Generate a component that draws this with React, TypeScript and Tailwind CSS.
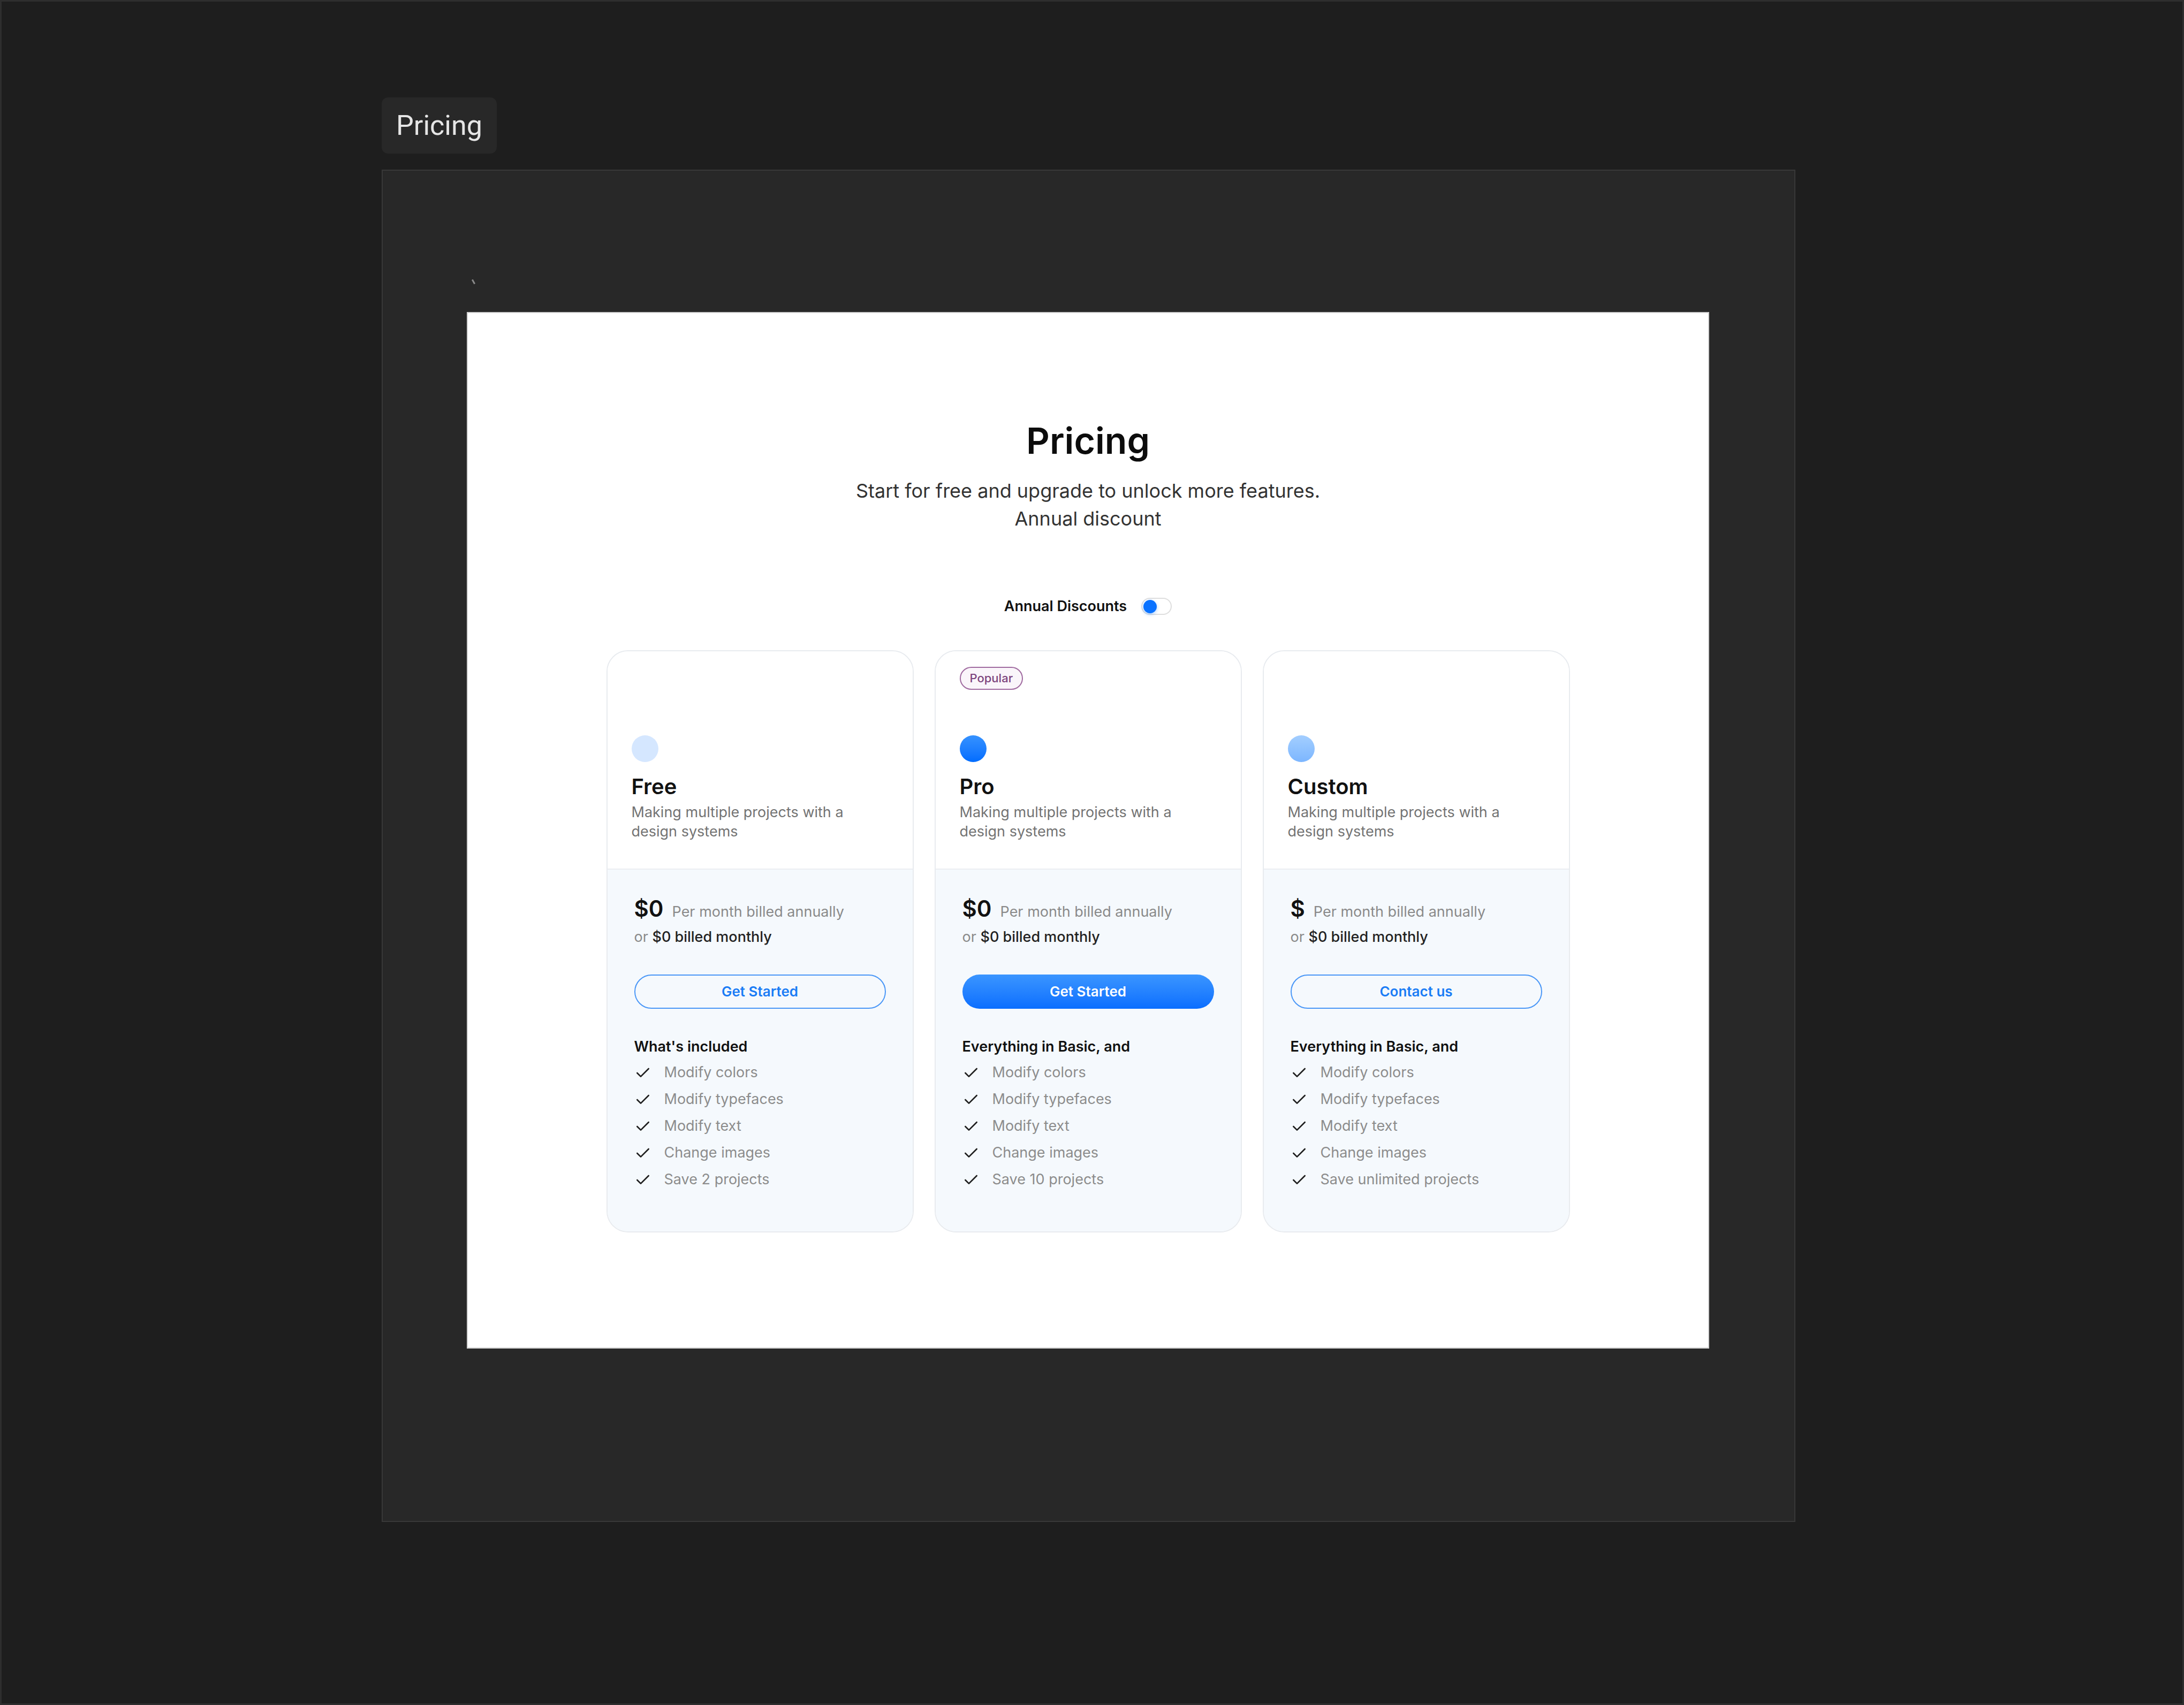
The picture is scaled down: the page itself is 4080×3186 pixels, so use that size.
import { Check } from "lucide-react";

type Plan = {
  name: string;
  popular?: boolean;
  dot: string;
  price: string;
  cta: string;
  solid?: boolean;
  heading: string;
  features: string[];
};

const plans: Plan[] = [
  {
    name: "Free",
    dot: "bg-[#d5e7ff]",
    price: "$0",
    cta: "Get Started",
    heading: "What's included",
    features: ["Modify colors", "Modify typefaces", "Modify text", "Change images", "Save 2 projects"],
  },
  {
    name: "Pro",
    popular: true,
    dot: "bg-gradient-to-b from-[#3592ff] to-[#006cff]",
    price: "$0",
    cta: "Get Started",
    solid: true,
    heading: "Everything in Basic, and",
    features: ["Modify colors", "Modify typefaces", "Modify text", "Change images", "Save 10 projects"],
  },
  {
    name: "Custom",
    dot: "bg-gradient-to-b from-[#a3ceff] to-[#7cb6ff]",
    price: "$",
    cta: "Contact us",
    heading: "Everything in Basic, and",
    features: ["Modify colors", "Modify typefaces", "Modify text", "Change images", "Save unlimited projects"],
  },
];

function PlanCard({ plan }: { plan: Plan }) {
  return (
    <div className="w-[574px] h-[1088px] rounded-[40px] border-2 border-[#e8ebef] overflow-hidden flex flex-col">
      <div className="bg-white h-[406px] px-[45px] pt-[29px] flex flex-col items-start">
        <div className="h-[43px]">
          {plan.popular && (
            <span className="inline-flex items-center h-[43px] px-[17px] rounded-full border-2 border-[#a06ba0] bg-[#faf5fa] text-[22px] font-medium text-[#7d447d]">
              Popular
            </span>
          )}
        </div>
        <div className={`mt-[85px] w-[50px] h-[50px] rounded-full ${plan.dot}`} />
        <h3 className="mt-[22px] text-[40px] leading-[48px] font-semibold text-[#111]">{plan.name}</h3>
        <p className="mt-[6px] w-[440px] text-[27px] leading-[36px] text-[#737373]">
          Making multiple projects with a design systems
        </p>
      </div>

      <div className="flex-1 bg-[#f5f9fd] border-t-2 border-[#eceef2] px-[50px] pt-[48px]">
        <div className="flex items-baseline gap-[16px]">
          <span className="text-[42px] leading-[50px] font-semibold text-[#111]">{plan.price}</span>
          <span className="text-[27px] text-[#8a8a8a]">Per month billed annually</span>
        </div>
        <div className="mt-[8px] text-[27px] leading-[36px]">
          <span className="text-[#8a8a8a]">or </span>
          <span className="text-[#222] font-medium">$0 billed monthly</span>
        </div>

        <button
          className={
            plan.solid
              ? "mt-[52px] w-full h-[64px] rounded-full bg-gradient-to-b from-[#3a95ff] to-[#0a6eff] text-white text-[26px] font-semibold"
              : "mt-[52px] w-full h-[64px] rounded-full border-2 border-[#4a97f7] text-[#1a7cf5] text-[26px] font-semibold"
          }
        >
          {plan.cta}
        </button>

        <div className="mt-[53px] text-[27px] leading-[36px] font-semibold text-[#111]">{plan.heading}</div>
        <ul className="mt-[6px]">
          {plan.features.map((f) => (
            <li key={f} className="h-[50px] flex items-center gap-[24px]">
              <Check size={32} strokeWidth={2} className="text-[#1f1f1f] shrink-0" />
              <span className="text-[27px] text-[#8c8c8c]">{f}</span>
            </li>
          ))}
        </ul>
      </div>
    </div>
  );
}

export default function App() {
  return (
    <div className="w-[4080px] h-[3186px] bg-[#1e1e1e] border-[3px] border-[#2e2e2e] pl-[710px] pt-[179px] font-['Inter',sans-serif]">
      <div className="inline-flex items-center h-[105px] px-[27px] rounded-[12px] bg-[#282828] text-[52px] text-[#e6e6e6] font-['Roboto',sans-serif]">
        Pricing
      </div>

      <div className="mt-[30px] w-[2641px] h-[2527px] bg-[#282828] border-2 border-[#383838] pl-[157px]">
        <div className="h-[264px] pt-[203px] pl-[11px]">
          <span className="block w-[3px] h-[9px] bg-[#8a8a8a] -rotate-[30deg]" />
        </div>

        <div className="w-[2321px] h-[1937px] bg-white border-2 border-[#cfcfcf] flex flex-col items-center pt-[198px]">
          <h1 className="text-[68px] leading-[80px] font-semibold text-[#0c0c0c]">Pricing</h1>
          <p className="mt-[28px] text-[36px] leading-[52px] text-[#333] text-center">
            Start for free and upgrade to unlock more features.
            <br />
            Annual discount
          </p>

          <div className="mt-[122px] flex items-center gap-[27px]">
            <span className="text-[27px] leading-[32px] font-semibold text-[#111]">Annual Discounts</span>
            <div className="w-[57px] h-[32px] rounded-full border-2 border-[#dedede] bg-white flex items-center px-[2px]">
              <div className="w-[25px] h-[25px] rounded-full bg-[#0a72ff] shadow-[0_2px_6px_rgba(10,114,255,0.35)]" />
            </div>
          </div>

          <div className="mt-[66px] flex gap-[39px]">
            {plans.map((p) => (
              <PlanCard key={p.name} plan={p} />
            ))}
          </div>
        </div>
      </div>
    </div>
  );
}
